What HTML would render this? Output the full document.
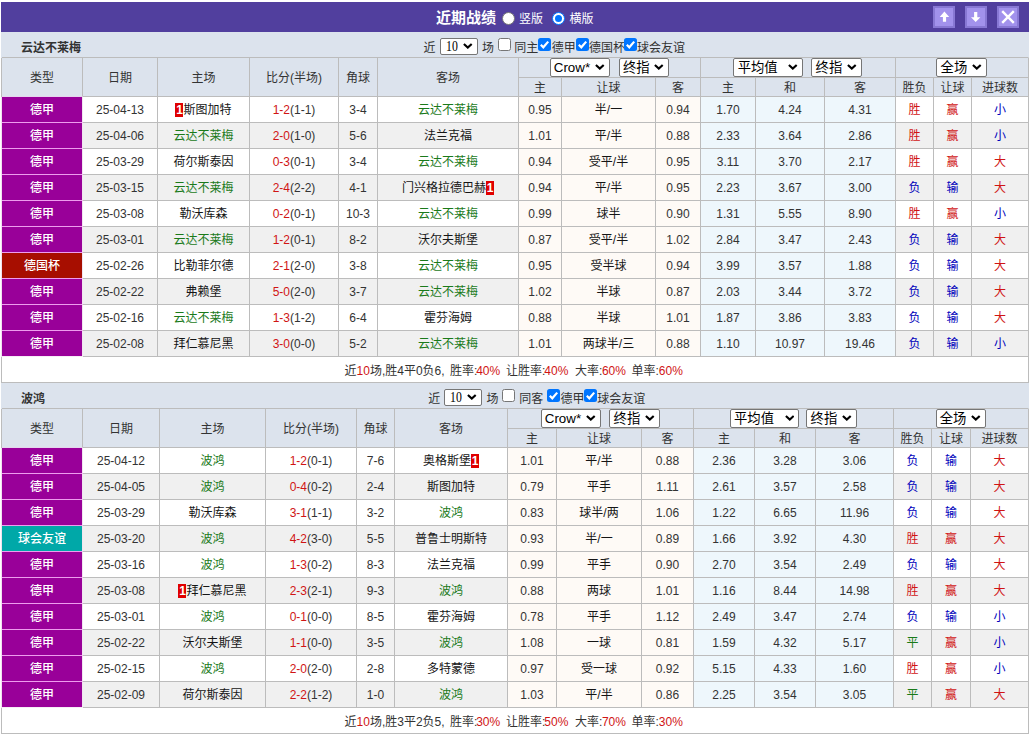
<!DOCTYPE html>
<html lang="zh-CN"><head><meta charset="utf-8"><title>近期战绩</title>
<style>
html,body{margin:0;padding:0;background:#fff;}
body{width:1031px;height:736px;overflow:hidden;position:relative;font-family:"Liberation Sans","Noto Sans CJK SC",sans-serif;font-size:12px;color:#333;}
#wrap{position:absolute;left:1px;top:2px;width:1028px;}
#bar{position:relative;height:30px;background:#513f9e;}
#bar .ttl{position:absolute;left:435px;top:0;height:30px;line-height:32px;font-size:15px;font-weight:bold;color:#fff;white-space:nowrap;}
#bar .opt{position:absolute;top:0;height:30px;line-height:35px;font-size:12px;color:#fff;white-space:nowrap;}
.radio{position:absolute;top:10px;width:13px;height:13px;border-radius:50%;background:#fff;box-sizing:border-box;border:1px solid #767676;}
.radio.on{border:1px solid #0075ff;background:#fff;}
.radio.on:after{content:"";position:absolute;left:2px;top:2px;width:7px;height:7px;border-radius:50%;background:#0075ff;}
.btn{position:absolute;top:4px;width:22px;height:22px;box-sizing:border-box;border:2px solid #8878d4;background:#a292ec;}
.btn svg{position:absolute;left:0;top:0;}
table{border-collapse:separate;border-spacing:0;table-layout:fixed;width:1028px;border-left:1px solid #bcbcbc;}
td,th{box-sizing:border-box;border-right:1px solid #bcbcbc;border-bottom:1px solid #bcbcbc;text-align:center;vertical-align:middle;padding:0;font-weight:normal;white-space:nowrap;overflow:hidden;height:26px;line-height:23px;padding-top:2px;font-size:12px;}
tr.trow td{height:26px;padding:0;border-right-color:#dce3ed;box-shadow:-1px 0 0 #dce3ed;background:#dce3ed;position:relative;text-align:left;overflow:visible;}
.tname{position:absolute;left:19px;top:0;font-weight:bold;line-height:32px;}
.filt{position:absolute;left:0;top:0;width:0;height:0;}
.ft{position:absolute;top:0;line-height:32px;white-space:nowrap;}
th{background:#dce3ed;}
tr.h1 th{height:20px;padding:0;}
tr.h1 th[rowspan]{height:39px;line-height:36px;padding-top:2px;}
tr.h2 th{height:19px;line-height:16px;padding:2px 0 0 0;}
th.sc{position:relative;overflow:visible;}
.sel{position:absolute;top:0;height:19px;box-sizing:border-box;border:1px solid #767676;border-radius:2px;background:#fff;text-align:left;line-height:17px;font-size:13.33px;color:#000;}
.sel .st{position:absolute;left:3.3px;top:-0.4px;white-space:nowrap;}
.sel .ar{position:absolute;right:4px;top:5.2px;}
.sel.s0{line-height:15px;font-family:"Liberation Serif",serif;font-size:14px;}
.sel.s0 .st{left:4.8px;top:-0.3px;transform:scaleX(.84);transform-origin:0 50%;}
.sel.s0 .ar{top:4px;right:3.9px;}
.cb{position:absolute;top:6px;width:13px;height:13px;box-sizing:border-box;border:1px solid #767676;border-radius:2.5px;background:#fff;}
.cb.on{border:none;background:#0075ff;}
.cb svg{display:block;}
tr.alt td{background:#f0f0f0;}
td.pk, tr.alt td.pk{background:#fefaf6;}
td.bl, tr.alt td.bl{background:#eef7fc;}
td.lg, tr.alt td.lg{color:#fff;background:#990099;border-right-color:#f1e6f1;border-bottom-color:#ee9cee;box-shadow:-1px 0 0 #efe2ef;overflow:visible;font-weight:500;}
tr.last td.lg{border-bottom-color:#f6ecf6;}
tr.h1 th.ty{border-bottom-color:#e6d4ee;}
td.lg.cup, tr.alt td.lg.cup{background:#a70e00;}
td.lg.fr, tr.alt td.lg.fr{background:#00a8a8;}
.gr{color:#1a7a1a;}
.r{color:#d01414;}
td.r{color:#d01414;}
td.b{color:#0000bb;}
td.gr{color:#1a7a1a;}
.rc{display:inline-block;background:#e00000;color:#fff;font-weight:bold;width:8px;height:14px;line-height:14px;text-align:center;vertical-align:middle;position:relative;top:-1px;}
tr.sum td{background:#fff;position:relative;height:26px;text-align:left;padding:0;}
.sumt{position:absolute;left:0;top:0;width:0;height:0;}
.sg{position:absolute;top:0;line-height:28px;white-space:nowrap;}

td.tn{color:#151515;}

</style></head>
<body>
<div id="wrap">
<div id="bar">
<div class="ttl">近期战绩</div>
<span class="radio" style="left:501.3px"></span><div class="opt" style="left:518px">竖版</div>
<span class="radio on" style="left:551.4px"></span><div class="opt" style="left:568.5px">横版</div>
<div class="btn" style="left:932px"><svg width="18" height="18" viewBox="0 0 18 18"><path d="M9.4 3.6 L14.2 8.9 L11.1 8.9 L11.1 13.7 L7.9 13.7 L7.9 8.9 L4.7 8.9 Z" fill="#fff"/></svg></div>
<div class="btn" style="left:964px"><svg width="18" height="18" viewBox="0 0 18 18"><path d="M8.7 14 L13.4 9.2 L10.3 9.2 L10.3 3.9 L7.1 3.9 L7.1 9.2 L4 9.2 Z" fill="#fff"/></svg></div>
<div class="btn" style="left:996px"><svg width="18" height="18" viewBox="0 0 18 18"><path d="M3.2 3.2 L14.8 14.8 M14.8 3.2 L3.2 14.8" stroke="#fff" stroke-width="2.4" fill="none"/></svg></div>
</div>

<table cellspacing="0" cellpadding="0">
<colgroup><col style="width:81px"><col style="width:75px"><col style="width:92px"><col style="width:89px"><col style="width:39px"><col style="width:141px"><col style="width:43px"><col style="width:94px"><col style="width:45px"><col style="width:55px"><col style="width:69px"><col style="width:71px"><col style="width:38px"><col style="width:38px"><col style="width:57px"></colgroup>
<tr class="trow"><td colspan="15"><div class="tname">云达不莱梅</div><div class="filt"><span class="ft" style="left:421.5px">近</span><span class="sel s0" style="left:438.2px;top:6.2px;width:37.5px;height:16.7px;position:absolute"><span class="st">10</span><svg class="ar" viewBox="0 0 9.6 5.8" width="9.6" height="5.8"><path d="M0.9 0.9 L4.8 4.6 L8.7 0.9" fill="none" stroke="#000" stroke-width="2.1" stroke-linecap="butt" stroke-linejoin="miter"/></svg></span><span class="ft" style="left:480px">场</span><span style="left:496px" class="cb"></span><span class="ft" style="left:512.3px">同主</span><span style="left:536px" class="cb on"><svg viewBox="0 0 13 13" width="13" height="13"><path d="M2.8 6.8 L5.3 9.3 L10.2 3.6" fill="none" stroke="#fff" stroke-width="2.2" stroke-linecap="butt" stroke-linejoin="miter"/></svg></span><span class="ft" style="left:549.7px">德甲</span><span style="left:573.5px" class="cb on"><svg viewBox="0 0 13 13" width="13" height="13"><path d="M2.8 6.8 L5.3 9.3 L10.2 3.6" fill="none" stroke="#fff" stroke-width="2.2" stroke-linecap="butt" stroke-linejoin="miter"/></svg></span><span class="ft" style="left:587px">德国杯</span><span style="left:622px" class="cb on"><svg viewBox="0 0 13 13" width="13" height="13"><path d="M2.8 6.8 L5.3 9.3 L10.2 3.6" fill="none" stroke="#fff" stroke-width="2.2" stroke-linecap="butt" stroke-linejoin="miter"/></svg></span><span class="ft" style="left:635px">球会友谊</span></div></td></tr>
<tr class="h1"><th rowspan="2" class="ty">类型</th><th rowspan="2">日期</th><th rowspan="2">主场</th><th rowspan="2">比分(半场)</th><th rowspan="2">角球</th><th rowspan="2">客场</th>
<th colspan="3" class="sc"><span class="sel" style="left:30.5px;width:60.3px"><span class="st">Crow*</span><svg class="ar" viewBox="0 0 9.6 5.8" width="9.6" height="5.8"><path d="M0.9 0.9 L4.8 4.6 L8.7 0.9" fill="none" stroke="#000" stroke-width="2.1" stroke-linecap="butt" stroke-linejoin="miter"/></svg></span><span class="sel" style="left:99.7px;width:50.4px"><span class="st">终指</span><svg class="ar" viewBox="0 0 9.6 5.8" width="9.6" height="5.8"><path d="M0.9 0.9 L4.8 4.6 L8.7 0.9" fill="none" stroke="#000" stroke-width="2.1" stroke-linecap="butt" stroke-linejoin="miter"/></svg></span></th>
<th colspan="3" class="sc"><span class="sel" style="left:32.4px;width:69.5px"><span class="st">平均值</span><svg class="ar" viewBox="0 0 9.6 5.8" width="9.6" height="5.8"><path d="M0.9 0.9 L4.8 4.6 L8.7 0.9" fill="none" stroke="#000" stroke-width="2.1" stroke-linecap="butt" stroke-linejoin="miter"/></svg></span><span class="sel" style="left:110.3px;width:50.4px"><span class="st">终指</span><svg class="ar" viewBox="0 0 9.6 5.8" width="9.6" height="5.8"><path d="M0.9 0.9 L4.8 4.6 L8.7 0.9" fill="none" stroke="#000" stroke-width="2.1" stroke-linecap="butt" stroke-linejoin="miter"/></svg></span></th>
<th colspan="3" class="sc"><span class="sel" style="left:40.3px;width:50.3px"><span class="st">全场</span><svg class="ar" viewBox="0 0 9.6 5.8" width="9.6" height="5.8"><path d="M0.9 0.9 L4.8 4.6 L8.7 0.9" fill="none" stroke="#000" stroke-width="2.1" stroke-linecap="butt" stroke-linejoin="miter"/></svg></span></th></tr>
<tr class="h2"><th>主</th><th>让球</th><th>客</th><th>主</th><th>和</th><th>客</th><th>胜负</th><th>让球</th><th>进球数</th></tr>
<tr><td class="lg lg">德甲</td><td>25-04-13</td><td class="tn"><span class="rc">1</span>斯图加特</td><td><span class="r">1-2</span>(1-1)</td><td>3-4</td><td class="tn"><span class="gr">云达不莱梅</span></td>
<td class="pk">0.95</td><td class="pk tn">半/一</td><td class="pk">0.94</td><td class="bl">1.70</td><td class="bl">4.24</td><td class="bl">4.31</td>
<td class="r">胜</td><td class="r">赢</td><td class="b">小</td></tr>
<tr class="alt"><td class="lg lg">德甲</td><td>25-04-06</td><td class="tn"><span class="gr">云达不莱梅</span></td><td><span class="r">2-0</span>(1-0)</td><td>5-6</td><td class="tn">法兰克福</td>
<td class="pk">1.01</td><td class="pk tn">平/半</td><td class="pk">0.88</td><td class="bl">2.33</td><td class="bl">3.64</td><td class="bl">2.86</td>
<td class="r">胜</td><td class="r">赢</td><td class="b">小</td></tr>
<tr><td class="lg lg">德甲</td><td>25-03-29</td><td class="tn">荷尔斯泰因</td><td><span class="r">0-3</span>(0-1)</td><td>3-4</td><td class="tn"><span class="gr">云达不莱梅</span></td>
<td class="pk">0.94</td><td class="pk tn">受平/半</td><td class="pk">0.95</td><td class="bl">3.11</td><td class="bl">3.70</td><td class="bl">2.17</td>
<td class="r">胜</td><td class="r">赢</td><td class="r">大</td></tr>
<tr class="alt"><td class="lg lg">德甲</td><td>25-03-15</td><td class="tn"><span class="gr">云达不莱梅</span></td><td><span class="r">2-4</span>(2-2)</td><td>4-1</td><td class="tn">门兴格拉德巴赫<span class="rc">1</span></td>
<td class="pk">0.94</td><td class="pk tn">平/半</td><td class="pk">0.95</td><td class="bl">2.23</td><td class="bl">3.67</td><td class="bl">3.00</td>
<td class="b">负</td><td class="b">输</td><td class="r">大</td></tr>
<tr><td class="lg lg">德甲</td><td>25-03-08</td><td class="tn">勒沃库森</td><td><span class="r">0-2</span>(0-1)</td><td>10-3</td><td class="tn"><span class="gr">云达不莱梅</span></td>
<td class="pk">0.99</td><td class="pk tn">球半</td><td class="pk">0.90</td><td class="bl">1.31</td><td class="bl">5.55</td><td class="bl">8.90</td>
<td class="r">胜</td><td class="r">赢</td><td class="b">小</td></tr>
<tr class="alt"><td class="lg lg">德甲</td><td>25-03-01</td><td class="tn"><span class="gr">云达不莱梅</span></td><td><span class="r">1-2</span>(0-1)</td><td>8-2</td><td class="tn">沃尔夫斯堡</td>
<td class="pk">0.87</td><td class="pk tn">受平/半</td><td class="pk">1.02</td><td class="bl">2.84</td><td class="bl">3.47</td><td class="bl">2.43</td>
<td class="b">负</td><td class="b">输</td><td class="r">大</td></tr>
<tr><td class="lg cup">德国杯</td><td>25-02-26</td><td class="tn">比勒菲尔德</td><td><span class="r">2-1</span>(2-0)</td><td>3-8</td><td class="tn"><span class="gr">云达不莱梅</span></td>
<td class="pk">0.95</td><td class="pk tn">受半球</td><td class="pk">0.94</td><td class="bl">3.99</td><td class="bl">3.57</td><td class="bl">1.88</td>
<td class="b">负</td><td class="b">输</td><td class="r">大</td></tr>
<tr class="alt"><td class="lg lg">德甲</td><td>25-02-22</td><td class="tn">弗赖堡</td><td><span class="r">5-0</span>(2-0)</td><td>3-7</td><td class="tn"><span class="gr">云达不莱梅</span></td>
<td class="pk">1.02</td><td class="pk tn">半球</td><td class="pk">0.87</td><td class="bl">2.03</td><td class="bl">3.44</td><td class="bl">3.72</td>
<td class="b">负</td><td class="b">输</td><td class="r">大</td></tr>
<tr><td class="lg lg">德甲</td><td>25-02-16</td><td class="tn"><span class="gr">云达不莱梅</span></td><td><span class="r">1-3</span>(1-2)</td><td>6-4</td><td class="tn">霍芬海姆</td>
<td class="pk">0.88</td><td class="pk tn">半球</td><td class="pk">1.01</td><td class="bl">1.87</td><td class="bl">3.86</td><td class="bl">3.83</td>
<td class="b">负</td><td class="b">输</td><td class="r">大</td></tr>
<tr class="alt last"><td class="lg lg">德甲</td><td>25-02-08</td><td class="tn">拜仁慕尼黑</td><td><span class="r">3-0</span>(0-0)</td><td>5-2</td><td class="tn"><span class="gr">云达不莱梅</span></td>
<td class="pk">1.01</td><td class="pk tn">两球半/三</td><td class="pk">0.88</td><td class="bl">1.10</td><td class="bl">10.97</td><td class="bl">19.46</td>
<td class="b">负</td><td class="b">输</td><td class="b">小</td></tr>
<tr class="sum"><td colspan="15"><div class="sumt"><span class="sg" style="left:342.5px">近<span class="r">10</span>场,胜4平0负6,</span><span class="sg" style="left:448px">胜率:</span><span class="sg" style="left:474.2px"><span class="r">40%</span></span><span class="sg" style="left:504px">让胜率:</span><span class="sg" style="left:542.3px"><span class="r">40%</span></span><span class="sg" style="left:573px">大率:</span><span class="sg" style="left:599.9px"><span class="r">60%</span></span><span class="sg" style="left:629.6px">单率:</span><span class="sg" style="left:656.8px"><span class="r">60%</span></span></div></td></tr>
</table>
<table cellspacing="0" cellpadding="0">
<colgroup><col style="width:81px"><col style="width:77px"><col style="width:106px"><col style="width:91px"><col style="width:38px"><col style="width:113px"><col style="width:49px"><col style="width:85px"><col style="width:52px"><col style="width:61px"><col style="width:61px"><col style="width:78px"><col style="width:38px"><col style="width:39px"><col style="width:58px"></colgroup>
<tr class="trow"><td colspan="15"><div class="tname">波鸿</div><div class="filt"><span class="ft" style="left:426.3px">近</span><span class="sel s0" style="left:442.4px;top:6.2px;width:37.5px;height:16.7px;position:absolute"><span class="st">10</span><svg class="ar" viewBox="0 0 9.6 5.8" width="9.6" height="5.8"><path d="M0.9 0.9 L4.8 4.6 L8.7 0.9" fill="none" stroke="#000" stroke-width="2.1" stroke-linecap="butt" stroke-linejoin="miter"/></svg></span><span class="ft" style="left:484.5px">场</span><span style="left:500px" class="cb"></span><span class="ft" style="left:517.2px">同客</span><span style="left:545px" class="cb on"><svg viewBox="0 0 13 13" width="13" height="13"><path d="M2.8 6.8 L5.3 9.3 L10.2 3.6" fill="none" stroke="#fff" stroke-width="2.2" stroke-linecap="butt" stroke-linejoin="miter"/></svg></span><span class="ft" style="left:558.5px">德甲</span><span style="left:582px" class="cb on"><svg viewBox="0 0 13 13" width="13" height="13"><path d="M2.8 6.8 L5.3 9.3 L10.2 3.6" fill="none" stroke="#fff" stroke-width="2.2" stroke-linecap="butt" stroke-linejoin="miter"/></svg></span><span class="ft" style="left:595.2px">球会友谊</span></div></td></tr>
<tr class="h1"><th rowspan="2" class="ty">类型</th><th rowspan="2">日期</th><th rowspan="2">主场</th><th rowspan="2">比分(半场)</th><th rowspan="2">角球</th><th rowspan="2">客场</th>
<th colspan="3" class="sc"><span class="sel" style="left:32.5px;width:60.3px"><span class="st">Crow*</span><svg class="ar" viewBox="0 0 9.6 5.8" width="9.6" height="5.8"><path d="M0.9 0.9 L4.8 4.6 L8.7 0.9" fill="none" stroke="#000" stroke-width="2.1" stroke-linecap="butt" stroke-linejoin="miter"/></svg></span><span class="sel" style="left:101.3px;width:50.4px"><span class="st">终指</span><svg class="ar" viewBox="0 0 9.6 5.8" width="9.6" height="5.8"><path d="M0.9 0.9 L4.8 4.6 L8.7 0.9" fill="none" stroke="#000" stroke-width="2.1" stroke-linecap="butt" stroke-linejoin="miter"/></svg></span></th>
<th colspan="3" class="sc"><span class="sel" style="left:35.7px;width:69.5px"><span class="st">平均值</span><svg class="ar" viewBox="0 0 9.6 5.8" width="9.6" height="5.8"><path d="M0.9 0.9 L4.8 4.6 L8.7 0.9" fill="none" stroke="#000" stroke-width="2.1" stroke-linecap="butt" stroke-linejoin="miter"/></svg></span><span class="sel" style="left:112.3px;width:50.4px"><span class="st">终指</span><svg class="ar" viewBox="0 0 9.6 5.8" width="9.6" height="5.8"><path d="M0.9 0.9 L4.8 4.6 L8.7 0.9" fill="none" stroke="#000" stroke-width="2.1" stroke-linecap="butt" stroke-linejoin="miter"/></svg></span></th>
<th colspan="3" class="sc"><span class="sel" style="left:41.5px;width:50.3px"><span class="st">全场</span><svg class="ar" viewBox="0 0 9.6 5.8" width="9.6" height="5.8"><path d="M0.9 0.9 L4.8 4.6 L8.7 0.9" fill="none" stroke="#000" stroke-width="2.1" stroke-linecap="butt" stroke-linejoin="miter"/></svg></span></th></tr>
<tr class="h2"><th>主</th><th>让球</th><th>客</th><th>主</th><th>和</th><th>客</th><th>胜负</th><th>让球</th><th>进球数</th></tr>
<tr><td class="lg lg">德甲</td><td>25-04-12</td><td class="tn"><span class="gr">波鸿</span></td><td><span class="r">1-2</span>(0-1)</td><td>7-6</td><td class="tn">奥格斯堡<span class="rc">1</span></td>
<td class="pk">1.01</td><td class="pk tn">平/半</td><td class="pk">0.88</td><td class="bl">2.36</td><td class="bl">3.28</td><td class="bl">3.06</td>
<td class="b">负</td><td class="b">输</td><td class="r">大</td></tr>
<tr class="alt"><td class="lg lg">德甲</td><td>25-04-05</td><td class="tn"><span class="gr">波鸿</span></td><td><span class="r">0-4</span>(0-2)</td><td>2-4</td><td class="tn">斯图加特</td>
<td class="pk">0.79</td><td class="pk tn">平手</td><td class="pk">1.11</td><td class="bl">2.61</td><td class="bl">3.57</td><td class="bl">2.58</td>
<td class="b">负</td><td class="b">输</td><td class="r">大</td></tr>
<tr><td class="lg lg">德甲</td><td>25-03-29</td><td class="tn">勒沃库森</td><td><span class="r">3-1</span>(1-1)</td><td>3-2</td><td class="tn"><span class="gr">波鸿</span></td>
<td class="pk">0.83</td><td class="pk tn">球半/两</td><td class="pk">1.06</td><td class="bl">1.22</td><td class="bl">6.65</td><td class="bl">11.96</td>
<td class="b">负</td><td class="b">输</td><td class="r">大</td></tr>
<tr class="alt"><td class="lg fr">球会友谊</td><td>25-03-20</td><td class="tn"><span class="gr">波鸿</span></td><td><span class="r">4-2</span>(3-0)</td><td>5-5</td><td class="tn">普鲁士明斯特</td>
<td class="pk">0.93</td><td class="pk tn">半/一</td><td class="pk">0.89</td><td class="bl">1.66</td><td class="bl">3.92</td><td class="bl">4.30</td>
<td class="r">胜</td><td class="r">赢</td><td class="r">大</td></tr>
<tr><td class="lg lg">德甲</td><td>25-03-16</td><td class="tn"><span class="gr">波鸿</span></td><td><span class="r">1-3</span>(0-2)</td><td>8-3</td><td class="tn">法兰克福</td>
<td class="pk">0.99</td><td class="pk tn">平手</td><td class="pk">0.90</td><td class="bl">2.70</td><td class="bl">3.54</td><td class="bl">2.49</td>
<td class="b">负</td><td class="b">输</td><td class="r">大</td></tr>
<tr class="alt"><td class="lg lg">德甲</td><td>25-03-08</td><td class="tn"><span class="rc">1</span>拜仁慕尼黑</td><td><span class="r">2-3</span>(2-1)</td><td>9-3</td><td class="tn"><span class="gr">波鸿</span></td>
<td class="pk">0.88</td><td class="pk tn">两球</td><td class="pk">1.01</td><td class="bl">1.16</td><td class="bl">8.44</td><td class="bl">14.98</td>
<td class="r">胜</td><td class="r">赢</td><td class="r">大</td></tr>
<tr><td class="lg lg">德甲</td><td>25-03-01</td><td class="tn"><span class="gr">波鸿</span></td><td><span class="r">0-1</span>(0-0)</td><td>8-5</td><td class="tn">霍芬海姆</td>
<td class="pk">0.78</td><td class="pk tn">平手</td><td class="pk">1.12</td><td class="bl">2.49</td><td class="bl">3.47</td><td class="bl">2.74</td>
<td class="b">负</td><td class="b">输</td><td class="b">小</td></tr>
<tr class="alt"><td class="lg lg">德甲</td><td>25-02-22</td><td class="tn">沃尔夫斯堡</td><td><span class="r">1-1</span>(0-0)</td><td>3-5</td><td class="tn"><span class="gr">波鸿</span></td>
<td class="pk">1.08</td><td class="pk tn">一球</td><td class="pk">0.81</td><td class="bl">1.59</td><td class="bl">4.32</td><td class="bl">5.17</td>
<td class="gr">平</td><td class="r">赢</td><td class="b">小</td></tr>
<tr><td class="lg lg">德甲</td><td>25-02-15</td><td class="tn"><span class="gr">波鸿</span></td><td><span class="r">2-0</span>(2-0)</td><td>2-8</td><td class="tn">多特蒙德</td>
<td class="pk">0.97</td><td class="pk tn">受一球</td><td class="pk">0.92</td><td class="bl">5.15</td><td class="bl">4.33</td><td class="bl">1.60</td>
<td class="r">胜</td><td class="r">赢</td><td class="b">小</td></tr>
<tr class="alt last"><td class="lg lg">德甲</td><td>25-02-09</td><td class="tn">荷尔斯泰因</td><td><span class="r">2-2</span>(1-2)</td><td>1-0</td><td class="tn"><span class="gr">波鸿</span></td>
<td class="pk">1.03</td><td class="pk tn">平/半</td><td class="pk">0.86</td><td class="bl">2.25</td><td class="bl">3.54</td><td class="bl">3.05</td>
<td class="gr">平</td><td class="r">赢</td><td class="r">大</td></tr>
<tr class="sum"><td colspan="15"><div class="sumt"><span class="sg" style="left:342.5px">近<span class="r">10</span>场,胜3平2负5,</span><span class="sg" style="left:448px">胜率:</span><span class="sg" style="left:474.2px"><span class="r">30%</span></span><span class="sg" style="left:504px">让胜率:</span><span class="sg" style="left:542.3px"><span class="r">50%</span></span><span class="sg" style="left:573px">大率:</span><span class="sg" style="left:599.9px"><span class="r">70%</span></span><span class="sg" style="left:629.6px">单率:</span><span class="sg" style="left:656.8px"><span class="r">30%</span></span></div></td></tr>
</table>
</div>
</body></html>
